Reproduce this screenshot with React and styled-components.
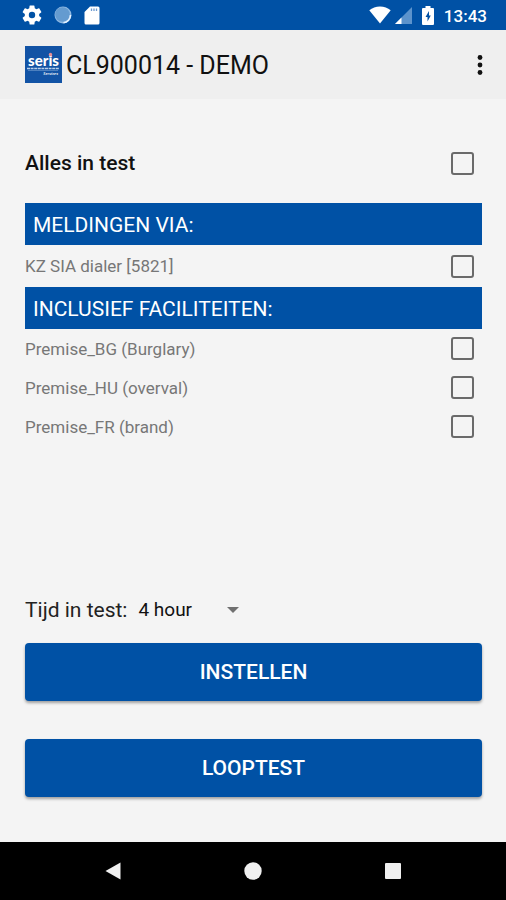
import React from "react";
import styled, { createGlobalStyle } from "styled-components";

const blue = "#0051a5";

const GlobalStyle = createGlobalStyle`
  *, *::before, *::after { box-sizing: border-box; }
  body { margin: 0; background: #f4f4f4; font-family: Roboto, "Liberation Sans", sans-serif; color: #111; }
  button, select, input { font: inherit; color: inherit; margin: 0; }
`;

const Screen = styled.div`
  display: flex;
  flex-direction: column;
  min-height: 100vh;
`;

const StatusBar = styled.div`
  display: flex;
  align-items: center;
  justify-content: space-between;
  height: 30px;
  padding: 0 19px 0 22px;
  background: ${blue};
  color: #fff;
`;

const StatusGroup = styled.div`
  display: flex;
  align-items: center;
  gap: ${(p) => p.$gap}px;
`;

const Clock = styled.time`
  font-size: 17px;
  font-weight: 500;
  line-height: 28px;
  padding-top: 2px;
`;

const AppBar = styled.header`
  display: flex;
  align-items: center;
  height: 69px;
  padding: 0 10px 0 25px;
  background: #efefef;
`;

const Title = styled.h1`
  flex: 1;
  margin: 0 0 0 4px;
  padding-top: 2px;
  font-size: 25px;
  line-height: 32px;
  font-weight: 400;
`;

const IconButton = styled.button`
  display: flex;
  align-items: center;
  justify-content: center;
  width: 32px;
  height: 40px;
  padding: 0;
  border: 0;
  background: none;
  cursor: pointer;
`;

const Main = styled.main`
  flex: 1;
  display: flex;
  flex-direction: column;
  padding: 44px 24px 45px 25px;
`;

const Row = styled.label`
  display: flex;
  align-items: center;
  justify-content: space-between;
  height: ${(p) => p.$height}px;
  padding-right: 8px;
  font-size: 17px;
  line-height: 24px;
  color: #777;
`;

const AllRow = styled(Row)`
  margin-bottom: 20px;
  font-size: 21px;
  line-height: 26px;
  font-weight: 500;
  color: #111;
`;

const Checkbox = styled.input.attrs({ type: "checkbox" })`
  appearance: none;
  width: 23px;
  height: 23px;
  border: 2px solid #6a6a6a;
  border-radius: 3px;
  cursor: pointer;
  &:checked { background: ${blue}; border-color: ${blue}; }
`;

const Band = styled.h2`
  margin: 0;
  padding: 2px 8px 0;
  background: ${blue};
  color: #fff;
  font-size: 21px;
  font-weight: 400;
  line-height: 40px;
`;

const Footer = styled.section`
  display: flex;
  flex-direction: column;
  gap: 38px;
  margin-top: auto;
`;

const Duration = styled.div`
  display: flex;
  align-items: center;
  height: 28px;
  margin-bottom: -19px;
  font-size: 21px;
  line-height: 28px;
  color: #222;
`;

const SelectBox = styled.div`
  display: grid;
  align-items: center;
  width: 101px;
  margin-left: 11px;
  > * { grid-area: 1 / 1; }
  > svg { justify-self: end; pointer-events: none; }
`;

const Select = styled.select`
  appearance: none;
  width: 100%;
  height: 28px;
  padding: 0;
  border: 0;
  background: none;
  font-size: 19px;
  color: #111;
`;

const ActionButton = styled.button`
  height: 58px;
  border: 0;
  border-radius: 4px;
  background: ${blue};
  color: #fff;
  font-size: 21px;
  font-weight: 500;
  box-shadow: 0 2px 3px rgba(0, 0, 0, 0.35);
  cursor: pointer;
`;

const NavBar = styled.nav`
  display: grid;
  grid-template-columns: repeat(3, 1fr);
  justify-items: center;
  align-items: center;
  height: 58px;
  padding: 0 43px;
  background: #000;
`;

const GearIcon = () => (
  <svg width="20" height="20" viewBox="2 2 20 20" fill="#fff">
    <path d="M19.14 12.94c.04-.3.06-.61.06-.94s-.02-.64-.07-.94l2.03-1.58a.49.49 0 0 0 .12-.61l-1.92-3.32a.49.49 0 0 0-.59-.22l-2.39.96a7 7 0 0 0-1.62-.94l-.36-2.54A.48.48 0 0 0 13.92 2.4h-3.84a.48.48 0 0 0-.48.41l-.36 2.54c-.59.24-1.13.57-1.62.94l-2.39-.96a.49.49 0 0 0-.59.22L2.74 8.87a.48.48 0 0 0 .12.61l2.03 1.58c-.05.3-.09.63-.09.94s.02.64.07.94l-2.03 1.58a.49.49 0 0 0-.12.61l1.92 3.32c.12.22.37.29.59.22l2.39-.96c.5.38 1.03.7 1.62.94l.36 2.54c.05.24.24.41.48.41h3.84c.24 0 .44-.17.47-.41l.36-2.54a7 7 0 0 0 1.62-.94l2.39.96c.22.08.47 0 .59-.22l1.92-3.32a.48.48 0 0 0-.12-.61zM12 15.2a3.2 3.2 0 1 1 0-6.4 3.2 3.2 0 0 1 0 6.4z" />
  </svg>
);

const CircleIcon = () => (
  <svg width="18" height="18" viewBox="0 0 18 18">
    <circle cx="9" cy="9" r="8.5" fill="#8db8e3" />
    <circle cx="8.5" cy="8.5" r="7.3" fill="#649bd0" />
    <path d="M16.5 9A8 8 0 0 1 9.500 16.8" fill="none" stroke="#e4f2ff" strokeWidth="1.6" />
  </svg>
);

const CardIcon = () => (
  <svg width="16" height="19" viewBox="0 0 16 19">
    <path d="M6 .5h8a1.5 1.5 0 0 1 1.5 1.5v15a1.5 1.5 0 0 1-1.5 1.5H2A1.5 1.5 0 0 1 .5 17V6z" fill="#fff" />
    <path d="M7.5 2.500v2.500M10 2.500v2.500M12.5 2.500v2.500" stroke="#6f9bd0" strokeWidth="1.3" />
  </svg>
);

const WifiIcon = () => (
  <svg width="22" height="18" viewBox="0 0 22 18">
    <path d="M11 17.5.3 4.2C3.2 1.9 6.900.5 11 .5s7.800 1.400 10.700 3.700z" fill="#fff" />
  </svg>
);

const SignalIcon = () => (
  <svg width="17" height="17" viewBox="0 0 17 17">
    <path d="M17 0v17H0z" fill="#5c93cc" />
    <path d="M6.500 10.500V17H0z" fill="#fff" />
  </svg>
);

const BatteryIcon = () => (
  <svg width="12" height="19" viewBox="0 0 12 19">
    <path d="M3.500 0h5v2H11a1 1 0 0 1 1 1v15a1 1 0 0 1-1 1H1a1 1 0 0 1-1-1V3a1 1 0 0 1 1-1h2.500z" fill="#fff" />
    <path d="M7 5 3.500 11h2v4.500L8.800 9.500H7z" fill={blue} />
  </svg>
);

const Logo = () => (
  <svg width="37" height="37" viewBox="0 0 37 37" role="img" aria-label="Seris Services">
    <rect width="37" height="37" fill="#1253a5" />
    <text x="18.500" y="20" textAnchor="middle" fontFamily="Lato, sans-serif" fontWeight="900" fontSize="15" fill="#fff">seris</text>
    <circle cx="25.500" cy="8.500" r="1.700" fill="#e88d94" />
    <path d="M2 22.500h32" stroke="#b8cfea" strokeWidth="1.400" strokeDasharray="3 .6" />
    <path d="M3 24.500h30" stroke="#4c7fbe" strokeWidth="1" />
    <text x="33" y="29" textAnchor="end" fontFamily="Open Sans, sans-serif" fontStyle="italic" fontWeight="600" fontSize="4" fill="#fff">Services</text>
  </svg>
);

const facilities = ["Premise_BG (Burglary)", "Premise_HU (overval)", "Premise_FR (brand)"];

export default function App() {
  return (
    <>
      <GlobalStyle />
      <Screen>
        <StatusBar>
          <StatusGroup $gap={12}>
            <GearIcon />
            <CircleIcon />
            <CardIcon />
          </StatusGroup>
          <StatusGroup $gap={10}>
            <StatusGroup $gap={4}>
              <WifiIcon />
              <SignalIcon />
            </StatusGroup>
            <BatteryIcon />
            <Clock>13:43</Clock>
          </StatusGroup>
        </StatusBar>
        <AppBar>
          <Logo />
          <Title>CL900014 - DEMO</Title>
          <IconButton aria-label="Menu">
            <svg width="6" height="20" viewBox="0 0 6 20" fill="#111">
              <circle cx="3" cy="2.500" r="2.400" />
              <circle cx="3" cy="10" r="2.400" />
              <circle cx="3" cy="17.500" r="2.400" />
            </svg>
          </IconButton>
        </AppBar>
        <Main>
          <AllRow $height={40}>
            Alles in test
            <Checkbox />
          </AllRow>
          <Band>MELDINGEN VIA:</Band>
          <Row $height={42}>
            KZ SIA dialer [5821]
            <Checkbox />
          </Row>
          <Band>INCLUSIEF FACILITEITEN:</Band>
          {facilities.map((name) => (
            <Row key={name} $height={39}>
              {name}
              <Checkbox />
            </Row>
          ))}
          <Footer>
            <Duration>
              <label htmlFor="duration">Tijd in test:</label>
              <SelectBox>
                <Select id="duration" defaultValue="4">
                  <option value="1">1 hour</option>
                  <option value="4">4 hour</option>
                  <option value="8">8 hour</option>
                </Select>
                <svg width="12" height="6" viewBox="0 0 12 6" fill="#707070">
                  <path d="M0 0h12L6 6z" />
                </svg>
              </SelectBox>
            </Duration>
            <ActionButton>INSTELLEN</ActionButton>
            <ActionButton>LOOPTEST</ActionButton>
          </Footer>
        </Main>
        <NavBar>
          <IconButton aria-label="Back">
            <svg width="16" height="18" viewBox="0 0 16 18" fill="#f0f0f0">
              <path d="M15.500.5v17L.5 9z" />
            </svg>
          </IconButton>
          <IconButton aria-label="Home">
            <svg width="18" height="18" viewBox="0 0 18 18" fill="#f0f0f0">
              <circle cx="9" cy="9" r="8.700" />
            </svg>
          </IconButton>
          <IconButton aria-label="Recent apps">
            <svg width="16" height="16" viewBox="0 0 16 16" fill="#f0f0f0">
              <rect width="16" height="16" rx="1" />
            </svg>
          </IconButton>
        </NavBar>
      </Screen>
    </>
  );
}
